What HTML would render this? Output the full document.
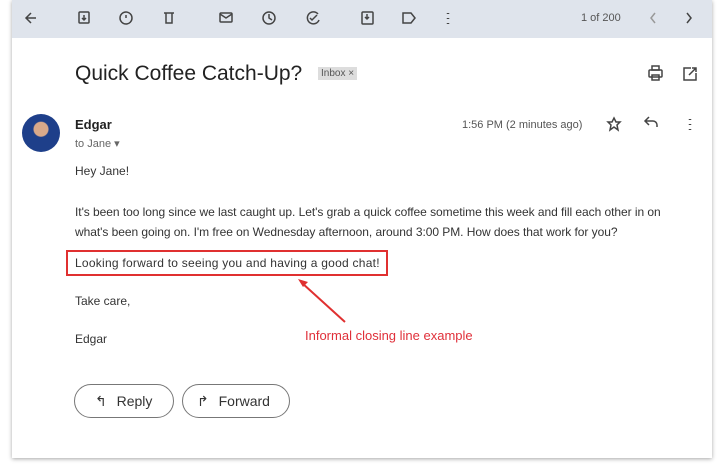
<!DOCTYPE html>
<html><head><style>
body{margin:0;width:720px;height:465px;background:#fff;font-family:"Liberation Sans",sans-serif;position:relative;overflow:hidden}
.card{position:absolute;left:12px;top:0;width:700px;height:458px;background:#fff;box-shadow:0 1px 4px rgba(0,0,0,.35)}
.tb{position:absolute;left:12px;top:0;width:700px;height:38px;background:#dfe4ec}
.a{position:absolute;color:#333;white-space:nowrap}
svg{position:absolute}
.btn{position:absolute;top:384px;height:34px;border:1px solid #777;border-radius:17px;box-sizing:border-box;font-size:14px;color:#333;line-height:32px}
</style></head><body>
<div class="card"></div>
<div class="tb"></div>
<svg width="720" height="38" style="left:0;top:0" fill="none" stroke="#444" stroke-width="1.5">
<path d="M36 18h-10M31 13l-5 5 5 5"/>
<rect x="79" y="12" width="10" height="11" rx="1"/><path d="M84 15v5M82 18l2 2 2-2"/>
<circle cx="126" cy="18" r="6"/><path d="M126 15v3"/>
<path d="M164 13h10M166 13v10h6V13"/>
<rect x="220" y="13" width="12" height="9" rx="1"/><path d="M220 14l6 4 6-4"/>
<circle cx="269" cy="18" r="6"/><path d="M269 14v4l3 2"/>
<path d="M318 14a6 6 0 1 0 1 6"/><path d="M310 18l2 2 5-5"/>
<rect x="362" y="12" width="11" height="12" rx="1"/><path d="M367 14v5M365 17l2 2 2-2"/>
<path d="M403 13h8l4 5-4 5h-8z"/>
<path d="M448 13v1M448 18v1M448 23v1" stroke-width="2.5"/>
<path d="M655 13l-4 5 4 5" stroke="#999"/><path d="M687 13l4 5-4 5"/>
</svg>
<div class="a" style="left:581px;top:12px;font-size:11px;color:#555">1 of 200</div>
<div class="a" style="left:75px;top:62px;font-size:21px;color:#222">Quick Coffee Catch-Up?</div>
<div class="a" style="left:318px;top:67px;font-size:10px;background:#ddd;color:#555;padding:1px 3px">Inbox ×</div>
<svg width="720" height="140" style="left:0;top:0" fill="none" stroke="#444" stroke-width="1.5">
<rect x="649" y="70" width="13" height="7" rx="1"/><rect x="652" y="66" width="7" height="4"/><rect x="652" y="75" width="7" height="5"/>
<path d="M691 68h-7v12h12v-7M689 75l7-7M692 68h4v4"/>
<path d="M614 118l2 4h4l-3 3 1 5-4-3-4 3 1-5-3-3h4z"/>
<path d="M657 127v-2a4 4 0 0 0-4-4h-7M649 117l-4 4 4 4"/>
<path d="M690 119v1M690 124v1M690 129v1" stroke-width="2.5"/>
</svg>
<div style="position:absolute;left:22px;top:114px;width:38px;height:38px;border-radius:50%;background:radial-gradient(circle at 50% 40%,#d9a98a 0 7px,#1e3f8a 8px);"></div>
<div class="a" style="left:75px;top:117px;font-size:13px;font-weight:bold;color:#222">Edgar</div>
<div class="a" style="left:75px;top:137px;font-size:11px;color:#666">to Jane ▾</div>
<div class="a" style="left:462px;top:119px;font-size:11px;color:#555">1:56 PM (2 minutes ago)</div>
<div class="a" style="left:75px;top:164px;font-size:12px">Hey Jane!</div>
<div class="a" style="left:75px;top:202px;font-size:12px;line-height:20px;letter-spacing:-0.05px">It's been too long since we last caught up. Let's grab a quick coffee sometime this week and fill each other in on<br>what's been going on. I'm free on Wednesday afternoon, around 3:00 PM. How does that work for you?</div>
<div style="position:absolute;left:66px;top:250px;width:322px;height:26px;border:2px solid #e03030;box-sizing:border-box"></div>
<div class="a" style="left:75px;top:256px;font-size:12px;letter-spacing:0.25px">Looking forward to seeing you and having a good chat!</div>
<div class="a" style="left:75px;top:294px;font-size:12px">Take care,</div>
<div class="a" style="left:75px;top:332px;font-size:12px">Edgar</div>
<div class="a" style="left:305px;top:328px;font-size:13px;color:#e0303a">Informal closing line example</div>
<svg width="720" height="465" style="left:0;top:0"><path d="M345 322L302 283" stroke="#e03030" stroke-width="2"/><path d="M298 279l10 3-5 5z" fill="#e03030"/></svg>
<div class="btn" style="left:74px;width:100px"><span style="margin-left:20px">↰</span> <span style="margin-left:6px">Reply</span></div>
<div class="btn" style="left:182px;width:108px"><span style="margin-left:14px">↱</span> <span style="margin-left:6px">Forward</span></div>
</body></html>
